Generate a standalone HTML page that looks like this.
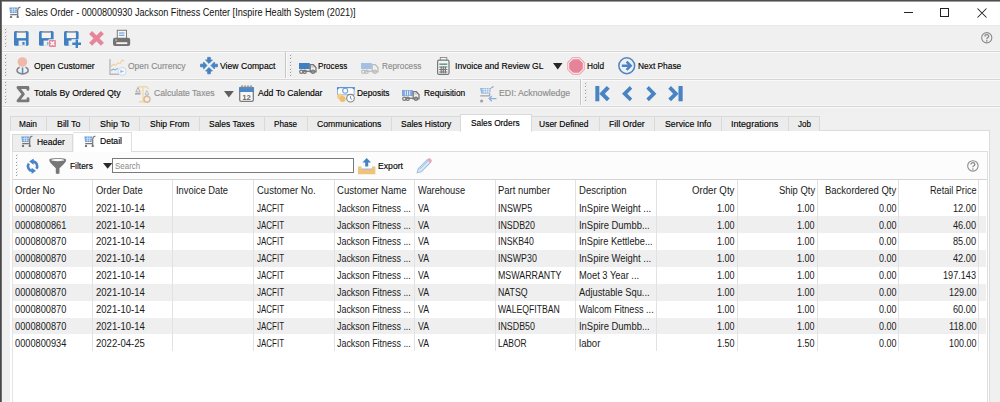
<!DOCTYPE html>
<html><head><meta charset="utf-8"><style>*{box-sizing:border-box;margin:0;padding:0}
html,body{width:1000px;height:402px;overflow:hidden;background:#f0f0f0}
body{font-family:"Liberation Sans",sans-serif;position:relative}
.t{position:absolute;white-space:nowrap;line-height:10px;transform-origin:0 0}
.r{position:absolute}
.i{position:absolute;overflow:visible}
</style></head><body>
<div class="r" style="left:0px;top:0px;width:1000px;height:402px;background:#f0f0f0"></div>
<div class="r" style="left:2px;top:1px;width:998px;height:24px;background:#ffffff"></div>
<div class="r" style="left:2px;top:25px;width:998px;height:1px;background:#e9e9e9"></div>
<div class="r" style="left:0px;top:0px;width:1000px;height:1px;background:#4e4e4e"></div>
<div class="r" style="left:0px;top:1px;width:1000px;height:1px;background:#9a9a9a"></div>
<div class="r" style="left:0px;top:0px;width:1px;height:402px;background:#4a4a4a"></div>
<div class="r" style="left:1px;top:1px;width:1px;height:401px;background:#6e6e6e"></div>
<svg class="i" style="left:9.2px;top:7px" width="12" height="11.5" viewBox="0 0 12 11.5"><path d="M0.3 0.6 H8.4 L7.7 5.9 H1.1 Z" fill="#6d9fd6"/><path d="M1.4 2.4 H8 M1.6 4.2 H7.8 M3.4 0.8 V5.7 M5.6 0.8 V5.7" stroke="#dbe7f4" stroke-width="0.7"/><path d="M8.7 9 V3 L9.5 0.9 L11.4 0" fill="none" stroke="#767676" stroke-width="1.2"/><path d="M1.2 7.6 H8.7" stroke="#767676" stroke-width="1.3"/><circle cx="2" cy="9.9" r="1.2" fill="#767676"/><circle cx="8.7" cy="9.9" r="1.2" fill="#767676"/></svg>
<div class="t" style="left:25.00px;top:8.20px;font-size:10px;color:#111;transform:scaleX(0.9110);-webkit-text-stroke:0px #111">Sales Order - 0000800930 Jackson Fitness Center [Inspire Health System (2021)]</div>
<div class="r" style="left:904px;top:12px;width:9px;height:1px;background:#222"></div>
<div class="r" style="left:940px;top:8px;width:9px;height:9px;border:1px solid #222"></div>
<svg class="i" style="left:977px;top:8px" width="10" height="10" viewBox="0 0 10 10"><path d="M0.5 0.5 L9.5 9.5 M9.5 0.5 L0.5 9.5" stroke="#222" stroke-width="1.05"/></svg>
<div class="r" style="left:5px;top:29.0px;width:1px;height:1px;background:#9a9a9a"></div>
<div class="r" style="left:6px;top:28.0px;width:1px;height:1px;background:#dadada"></div>
<div class="r" style="left:5px;top:32.4px;width:1px;height:1px;background:#9a9a9a"></div>
<div class="r" style="left:6px;top:31.4px;width:1px;height:1px;background:#dadada"></div>
<div class="r" style="left:5px;top:35.8px;width:1px;height:1px;background:#9a9a9a"></div>
<div class="r" style="left:6px;top:34.8px;width:1px;height:1px;background:#dadada"></div>
<div class="r" style="left:5px;top:39.2px;width:1px;height:1px;background:#9a9a9a"></div>
<div class="r" style="left:6px;top:38.2px;width:1px;height:1px;background:#dadada"></div>
<div class="r" style="left:5px;top:42.6px;width:1px;height:1px;background:#9a9a9a"></div>
<div class="r" style="left:6px;top:41.6px;width:1px;height:1px;background:#dadada"></div>
<div class="r" style="left:5px;top:46.0px;width:1px;height:1px;background:#9a9a9a"></div>
<div class="r" style="left:6px;top:45.0px;width:1px;height:1px;background:#dadada"></div>
<svg class="i" style="left:14.4px;top:31px" width="18" height="17" viewBox="0 0 18 17"><rect x="0" y="0" width="14.6" height="14.8" rx="1.6" fill="#4080c2"/><rect x="2.7" y="1.5" width="9.2" height="5.6" fill="#f4f4f4"/><rect x="3.3" y="0" width="8.2" height="1.5" fill="#9a9a9a"/><rect x="4.6" y="9.6" width="7.3" height="5.2" fill="#f0f0f0"/><rect x="8.4" y="11" width="2.2" height="2.8" fill="#4080c2"/></svg>
<svg class="i" style="left:39.2px;top:31px" width="18" height="17" viewBox="0 0 18 17"><rect x="0" y="0" width="14.6" height="14.8" rx="1.6" fill="#4080c2"/><rect x="2.7" y="1.5" width="9.2" height="5.6" fill="#f4f4f4"/><rect x="3.3" y="0" width="8.2" height="1.5" fill="#9a9a9a"/><rect x="4.6" y="9.6" width="7.3" height="5.2" fill="#f0f0f0"/><rect x="8.4" y="11" width="2.2" height="2.8" fill="#4080c2"/><rect x="9.3" y="8.3" width="8" height="8" rx="1" fill="#f0f0f0"/><rect x="10" y="9" width="6.9" height="7" rx="0.8" fill="#e7879b"/><path d="M11.6 10.6 L15.3 14.3 M15.3 10.6 L11.6 14.3" stroke="#fff" stroke-width="1.4"/></svg>
<svg class="i" style="left:64.1px;top:31px" width="18" height="17" viewBox="0 0 18 17"><rect x="0" y="0" width="14.6" height="14.8" rx="1.6" fill="#4080c2"/><rect x="2.7" y="1.5" width="9.2" height="5.6" fill="#f4f4f4"/><rect x="3.3" y="0" width="8.2" height="1.5" fill="#9a9a9a"/><rect x="4.6" y="9.6" width="7.3" height="5.2" fill="#f0f0f0"/><rect x="8.4" y="11" width="2.2" height="2.8" fill="#4080c2"/><rect x="7.5" y="8.2" width="10" height="9" fill="#f0f0f0"/><path d="M12.8 8.6 V17 M8.3 12.8 H17" stroke="#4080c2" stroke-width="2.4"/></svg>
<svg class="i" style="left:89.2px;top:31.2px" width="15" height="14.8" viewBox="0 0 15 14.8"><path d="M1.6 1.5 L13.4 13.3 M13.4 1.5 L1.6 13.3" stroke="#e6859a" stroke-width="4.2" stroke-linecap="butt"/></svg>
<svg class="i" style="left:113px;top:30px" width="17.2" height="16.2" viewBox="0 0 17.2 16.2"><rect x="4.3" y="0.3" width="9.2" height="8.5" fill="#f6f6f6" stroke="#7a7a7a" stroke-width="1"/><path d="M6 3 H11.5 M6 5.2 H11.5" stroke="#5a93d0" stroke-width="1.1"/><rect x="0" y="7.8" width="17.2" height="8.3" rx="2" fill="#727272"/><rect x="3.3" y="12.2" width="11" height="1.9" fill="#f2f2f2"/><rect x="2.2" y="9.6" width="1.8" height="0.9" fill="#ddd"/></svg>
<svg class="i" style="left:980.5px;top:32px" width="11.5" height="11.5" viewBox="0 0 11.5 11.5"><circle cx="5.75" cy="5.75" r="5.1" fill="none" stroke="#8a8a8a" stroke-width="1.1"/><path d="M3.9 4.4 Q3.9 2.6 5.8 2.6 Q7.7 2.6 7.7 4.3 Q7.7 5.3 6.4 5.9 Q5.8 6.2 5.8 7.2" fill="none" stroke="#8a8a8a" stroke-width="1.3"/><circle cx="5.8" cy="8.9" r="0.8" fill="#8a8a8a"/></svg>
<div class="r" style="left:2px;top:50px;width:998px;height:1px;background:#f7f7f7"></div>
<div class="r" style="left:2px;top:51px;width:998px;height:1px;background:#d6d6d6"></div>
<div class="r" style="left:2px;top:52px;width:998px;height:1px;background:#fafafa"></div>
<div class="r" style="left:5px;top:55.0px;width:1px;height:1px;background:#9a9a9a"></div>
<div class="r" style="left:6px;top:54.0px;width:1px;height:1px;background:#dadada"></div>
<div class="r" style="left:5px;top:58.4px;width:1px;height:1px;background:#9a9a9a"></div>
<div class="r" style="left:6px;top:57.4px;width:1px;height:1px;background:#dadada"></div>
<div class="r" style="left:5px;top:61.8px;width:1px;height:1px;background:#9a9a9a"></div>
<div class="r" style="left:6px;top:60.8px;width:1px;height:1px;background:#dadada"></div>
<div class="r" style="left:5px;top:65.2px;width:1px;height:1px;background:#9a9a9a"></div>
<div class="r" style="left:6px;top:64.2px;width:1px;height:1px;background:#dadada"></div>
<div class="r" style="left:5px;top:68.6px;width:1px;height:1px;background:#9a9a9a"></div>
<div class="r" style="left:6px;top:67.6px;width:1px;height:1px;background:#dadada"></div>
<div class="r" style="left:5px;top:72.0px;width:1px;height:1px;background:#9a9a9a"></div>
<div class="r" style="left:6px;top:71.0px;width:1px;height:1px;background:#dadada"></div>
<div class="r" style="left:5px;top:75.4px;width:1px;height:1px;background:#9a9a9a"></div>
<div class="r" style="left:6px;top:74.4px;width:1px;height:1px;background:#dadada"></div>
<svg class="i" style="left:16px;top:57px" width="13.5" height="18" viewBox="0 0 13.5 18"><circle cx="6.4" cy="5" r="4.8" fill="#efb9aa"/><path d="M3.7 10.3 A5.6 3.6 0 1 0 9.5 10.3" fill="none" stroke="#858585" stroke-width="1.6"/><rect x="5.8" y="10.5" width="1.5" height="6.6" fill="#4b8bcc"/></svg>
<div class="t" style="left:34.30px;top:61.30px;font-size:9.75px;color:#000;transform:scaleX(0.8818);-webkit-text-stroke:0.15px #000">Open Customer</div>
<svg class="i" style="left:108.5px;top:59px" width="18" height="16" viewBox="0 0 18 16"><path d="M1 0 V15.2 H10" fill="none" stroke="#b9b9b9" stroke-width="1.4"/><path d="M2 7.5 L4.5 5.2 L6.5 6.3 L9 3.8 L11 4.6 L13.3 1 L15 2.3" fill="none" stroke="#f1d197" stroke-width="1.1"/><path d="M2 11.5 L4.3 10.2 L6.3 11 L8.8 9.3" fill="none" stroke="#86b0de" stroke-width="1.1"/><circle cx="13.2" cy="12.4" r="4" fill="#f4f8fc" stroke="#c3d6ec" stroke-width="0.9"/><path d="M12 10.8 V14 M11.4 12.4 H14.6" stroke="#8fb3da" stroke-width="0.9"/></svg>
<div class="t" style="left:128.40px;top:61.30px;font-size:9.75px;color:#8c8c8c;transform:scaleX(0.8713);-webkit-text-stroke:0.15px #8c8c8c">Open Currency</div>
<svg class="i" style="left:199.5px;top:57.3px" width="18" height="17.5" viewBox="0 0 18 17.5"><g fill="#4582c4" stroke="#4582c4" stroke-width="0.9" stroke-linejoin="round"><path d="M9 6.4 L5.6 3 L7.7 3 L7.7 0.4 L10.3 0.4 L10.3 3 L12.4 3 Z"/><path d="M9 10.6 L5.6 14 L7.7 14 L7.7 16.8 L10.3 16.8 L10.3 14 L12.4 14 Z"/><path d="M7 8.5 L3.6 5.1 L3.6 7.2 L0.6 7.2 L0.6 9.8 L3.6 9.8 L3.6 11.9 Z"/><path d="M11 8.5 L14.4 5.1 L14.4 7.2 L17.4 7.2 L17.4 9.8 L14.4 9.8 L14.4 11.9 Z"/></g></svg>
<div class="t" style="left:220.00px;top:61.30px;font-size:9.75px;color:#000;transform:scaleX(0.8837);-webkit-text-stroke:0.15px #000">View Compact</div>
<div class="r" style="left:285px;top:52px;width:1px;height:27px;background:#c6c6c6"></div>
<div class="r" style="left:286px;top:52px;width:1px;height:27px;background:#fbfbfb"></div>
<div class="r" style="left:289.5px;top:55.0px;width:1px;height:1px;background:#9a9a9a"></div>
<div class="r" style="left:290.5px;top:54.0px;width:1px;height:1px;background:#dadada"></div>
<div class="r" style="left:289.5px;top:58.4px;width:1px;height:1px;background:#9a9a9a"></div>
<div class="r" style="left:290.5px;top:57.4px;width:1px;height:1px;background:#dadada"></div>
<div class="r" style="left:289.5px;top:61.8px;width:1px;height:1px;background:#9a9a9a"></div>
<div class="r" style="left:290.5px;top:60.8px;width:1px;height:1px;background:#dadada"></div>
<div class="r" style="left:289.5px;top:65.2px;width:1px;height:1px;background:#9a9a9a"></div>
<div class="r" style="left:290.5px;top:64.2px;width:1px;height:1px;background:#dadada"></div>
<div class="r" style="left:289.5px;top:68.6px;width:1px;height:1px;background:#9a9a9a"></div>
<div class="r" style="left:290.5px;top:67.6px;width:1px;height:1px;background:#dadada"></div>
<div class="r" style="left:289.5px;top:72.0px;width:1px;height:1px;background:#9a9a9a"></div>
<div class="r" style="left:290.5px;top:71.0px;width:1px;height:1px;background:#dadada"></div>
<div class="r" style="left:289.5px;top:75.4px;width:1px;height:1px;background:#9a9a9a"></div>
<div class="r" style="left:290.5px;top:74.4px;width:1px;height:1px;background:#dadada"></div>
<svg class="i" style="left:298.6px;top:62.6px" width="17.5" height="10.8" viewBox="0 0 17.5 10.8"><rect x="0" y="0" width="10.8" height="6" fill="#4080c2"/><path d="M11.2 1.7 H14.3 L17 4.6 V8.8 H11.2 Z" fill="none" stroke="#747474" stroke-width="1.3"/><path d="M12.3 2.9 H14 L15.6 4.6 H12.3 Z" fill="#747474" opacity="0.35"/><rect x="5" y="7.6" width="6.5" height="1.3" fill="#747474"/><circle cx="2.3" cy="8.8" r="1.6" fill="none" stroke="#747474" stroke-width="1.2"/><circle cx="5.7" cy="8.8" r="1.6" fill="none" stroke="#747474" stroke-width="1.2"/><circle cx="14" cy="8.8" r="1.6" fill="none" stroke="#747474" stroke-width="1.2"/></svg>
<div class="t" style="left:318.40px;top:61.30px;font-size:9.75px;color:#000;transform:scaleX(0.8296);-webkit-text-stroke:0.15px #000">Process</div>
<svg class="i" style="left:361px;top:62.6px" width="17.5" height="10.8" viewBox="0 0 17.5 10.8"><g opacity="1"><rect x="0" y="0" width="10.8" height="6" fill="#a4c0e2"/><path d="M11.2 1.7 H14.3 L17 4.6 V8.8 H11.2 Z" fill="none" stroke="#bdbdbd" stroke-width="1.3"/><rect x="5" y="7.6" width="6.5" height="1.3" fill="#bdbdbd"/><circle cx="2.3" cy="8.8" r="1.6" fill="none" stroke="#bdbdbd" stroke-width="1.2"/><circle cx="5.7" cy="8.8" r="1.6" fill="none" stroke="#bdbdbd" stroke-width="1.2"/><circle cx="14" cy="8.8" r="1.6" fill="none" stroke="#bdbdbd" stroke-width="1.2"/></g></svg>
<div class="t" style="left:381.60px;top:61.30px;font-size:9.75px;color:#8c8c8c;transform:scaleX(0.8454);-webkit-text-stroke:0.15px #8c8c8c">Reprocess</div>
<svg class="i" style="left:437px;top:57px" width="12.5" height="18" viewBox="0 0 12.5 18"><rect x="3.3" y="0.5" width="6.5" height="4" fill="#f7f7f7" stroke="#8a8a8a" stroke-width="0.9"/><rect x="0.6" y="3.2" width="11.4" height="14.2" rx="1.5" fill="#f4f4f4" stroke="#767676" stroke-width="1.2"/><rect x="2.3" y="6.4" width="8" height="1.6" fill="#5fa386"/><path d="M2.2 10 H10.4 M2.2 12.5 H10.4 M2.2 15 H10.4 M4.2 9.2 V16.2 M6.3 9.2 V16.2 M8.4 9.2 V16.2" stroke="#777" stroke-width="1.2"/></svg>
<div class="t" style="left:454.50px;top:61.30px;font-size:9.75px;color:#000;transform:scaleX(0.8830);-webkit-text-stroke:0.15px #000">Invoice and Review GL</div>
<svg class="i" style="left:553.2px;top:62.6px" width="9.5" height="6.5" viewBox="0 0 9.5 6.5"><path d="M0 0 H9.5 L4.75 6.5 Z" fill="#262626"/></svg>
<svg class="i" style="left:566.5px;top:57px" width="18" height="18" viewBox="0 0 18 18"><path d="M5.3 0.3 H12.7 L17.7 5.3 V12.7 L12.7 17.7 H5.3 L0.3 12.7 V5.3 Z" fill="#eb9dac"/><path d="M5.7 1.3 H12.3 L16.7 5.7 V12.3 L12.3 16.7 H5.7 L1.3 12.3 V5.7 Z" fill="#fdf3f5"/><path d="M6.1 2.2 H11.9 L15.8 6.1 V11.9 L11.9 15.8 H6.1 L2.2 11.9 V6.1 Z" fill="#e58397"/></svg>
<div class="t" style="left:586.75px;top:61.30px;font-size:9.75px;color:#000;transform:scaleX(0.8464);-webkit-text-stroke:0.15px #000">Hold</div>
<svg class="i" style="left:617.5px;top:57.4px" width="17.5" height="17.5" viewBox="0 0 17.5 17.5"><circle cx="8.75" cy="8.75" r="7.9" fill="none" stroke="#4a84c4" stroke-width="1.5"/><path d="M3.8 8.75 H11.8" stroke="#4a84c4" stroke-width="2.5"/><path d="M8.6 4.6 L12.7 8.75 L8.6 12.9" fill="none" stroke="#4a84c4" stroke-width="2.5"/></svg>
<div class="t" style="left:637.50px;top:61.30px;font-size:9.75px;color:#000;transform:scaleX(0.8580);-webkit-text-stroke:0.15px #000">Next Phase</div>
<div class="r" style="left:2px;top:78px;width:998px;height:1px;background:#f7f7f7"></div>
<div class="r" style="left:2px;top:79px;width:998px;height:1px;background:#d6d6d6"></div>
<div class="r" style="left:2px;top:80px;width:998px;height:1px;background:#fafafa"></div>
<div class="r" style="left:5px;top:82.0px;width:1px;height:1px;background:#9a9a9a"></div>
<div class="r" style="left:6px;top:81.0px;width:1px;height:1px;background:#dadada"></div>
<div class="r" style="left:5px;top:85.4px;width:1px;height:1px;background:#9a9a9a"></div>
<div class="r" style="left:6px;top:84.4px;width:1px;height:1px;background:#dadada"></div>
<div class="r" style="left:5px;top:88.8px;width:1px;height:1px;background:#9a9a9a"></div>
<div class="r" style="left:6px;top:87.8px;width:1px;height:1px;background:#dadada"></div>
<div class="r" style="left:5px;top:92.2px;width:1px;height:1px;background:#9a9a9a"></div>
<div class="r" style="left:6px;top:91.2px;width:1px;height:1px;background:#dadada"></div>
<div class="r" style="left:5px;top:95.6px;width:1px;height:1px;background:#9a9a9a"></div>
<div class="r" style="left:6px;top:94.6px;width:1px;height:1px;background:#dadada"></div>
<div class="r" style="left:5px;top:99.0px;width:1px;height:1px;background:#9a9a9a"></div>
<div class="r" style="left:6px;top:98.0px;width:1px;height:1px;background:#dadada"></div>
<div class="r" style="left:5px;top:102.4px;width:1px;height:1px;background:#9a9a9a"></div>
<div class="r" style="left:6px;top:101.4px;width:1px;height:1px;background:#dadada"></div>
<svg class="i" style="left:15.5px;top:85.6px" width="13.5" height="16.4" viewBox="0 0 13.5 16.4"><path d="M11.9 3.4 V1.5 H2 L7.3 8.2 L2 14.9 H12 V12.8" fill="none" stroke="#787878" stroke-width="2.9" stroke-linejoin="round" stroke-linecap="round"/></svg>
<div class="t" style="left:34.00px;top:88.30px;font-size:9.75px;color:#000;transform:scaleX(0.9042);-webkit-text-stroke:0.15px #000">Totals By Ordered Qty</div>
<svg class="i" style="left:134.5px;top:85.6px" width="15.5" height="17.2" viewBox="0 0 15.5 17.2"><path d="M2.5 0.8 H11.5 L14 3 M8 0.8 V15.5 M4 15.8 H11" fill="none" stroke="#f0d9a6" stroke-width="1.4"/><path d="M3 1.5 L0.8 6 H5.2 Z" fill="none" stroke="#a0a0a0" stroke-width="0.8"/><rect x="0" y="7" width="5.6" height="1.6" fill="#a8a8a8"/><path d="M11.8 4.5 L10 8.3 H13.8 Z" fill="none" stroke="#b0b0b0" stroke-width="0.8"/><circle cx="12" cy="13.2" r="3" fill="#f6ede4" stroke="#d8b99a" stroke-width="1.4"/><rect x="10.8" y="9.2" width="2.4" height="1.6" fill="#d8b99a"/></svg>
<div class="t" style="left:154.00px;top:88.30px;font-size:9.75px;color:#8c8c8c;transform:scaleX(0.8814);-webkit-text-stroke:0.15px #8c8c8c">Calculate Taxes</div>
<svg class="i" style="left:224px;top:90.5px" width="9.8" height="6.4" viewBox="0 0 9.8 6.4"><path d="M0 0 H9.8 L4.9 6.4 Z" fill="#5e5e5e"/></svg>
<svg class="i" style="left:238.8px;top:84.8px" width="15" height="17" viewBox="0 0 15 17"><rect x="0.7" y="2.5" width="13.6" height="13.8" rx="1.4" fill="#f8f8f8" stroke="#7c7c7c" stroke-width="1.3"/><rect x="0" y="2.2" width="15" height="4.8" fill="#4a88c8"/><path d="M0 7 L2 6 L3.7 7 L5.5 6 L7.5 7 L9.5 6 L11.3 7 L13 6 L15 7" fill="#4a88c8"/><path d="M3 0.3 V3.5 M6 0.3 V3.5 M9 0.3 V3.5 M12 0.3 V3.5" stroke="#8a8a8a" stroke-width="1.3"/><text x="7.5" y="14.6" font-family="Liberation Sans" font-size="7.8" text-anchor="middle" fill="#6a6a6a" font-weight="bold">12</text></svg>
<div class="t" style="left:258.00px;top:88.30px;font-size:9.75px;color:#000;transform:scaleX(0.8904);-webkit-text-stroke:0.15px #000">Add To Calendar</div>
<svg class="i" style="left:336.5px;top:87.4px" width="17.5" height="15.4" viewBox="0 0 17.5 15.4"><rect x="0.4" y="0.4" width="16.7" height="7.4" fill="#fbfcfe" stroke="#7aa3d4" stroke-width="0.8"/><path d="M0 0 H3.5 L0 3 Z M17.5 0 H14 L17.5 3 Z" fill="#3f7ec2"/><rect x="0" y="0" width="17.5" height="1.2" fill="#5f97d0"/><circle cx="8.2" cy="3.8" r="2.5" fill="none" stroke="#6e9fd6" stroke-width="1.1"/><circle cx="3" cy="9.5" r="3" fill="#f2cf8b"/><circle cx="5.6" cy="12" r="3" fill="#ecc071"/><circle cx="13.5" cy="11.2" r="3.8" fill="#fbfbfb" stroke="#858585" stroke-width="1.1"/><path d="M13.5 9 V11.4 L15.2 12.6" fill="none" stroke="#5f8ec8" stroke-width="0.9"/></svg>
<div class="t" style="left:356.75px;top:88.30px;font-size:9.75px;color:#000;transform:scaleX(0.8569);-webkit-text-stroke:0.15px #000">Deposits</div>
<svg class="i" style="left:402.3px;top:89.8px" width="17.5" height="10.8" viewBox="0 0 17.5 10.8"><rect x="0" y="0" width="10.8" height="6" fill="#7ea6da"/><path d="M3.3 0.6 V5.4 M5.5 0.6 V5.4 M7.7 0.6 V5.4" stroke="#eef3fa" stroke-width="0.9"/><path d="M11.2 1.7 H14.3 L17 4.6 V8.8 H11.2 Z" fill="none" stroke="#777" stroke-width="1.3"/><path d="M12.3 2.9 H14 L15.6 4.6 H12.3 Z" fill="#777" opacity="0.35"/><rect x="5" y="7.6" width="6.5" height="1.3" fill="#777"/><circle cx="2.3" cy="8.8" r="1.6" fill="none" stroke="#777" stroke-width="1.2"/><circle cx="5.7" cy="8.8" r="1.6" fill="none" stroke="#777" stroke-width="1.2"/><circle cx="14" cy="8.8" r="1.6" fill="none" stroke="#777" stroke-width="1.2"/></svg>
<div class="t" style="left:423.75px;top:88.30px;font-size:9.75px;color:#000;transform:scaleX(0.8547);-webkit-text-stroke:0.15px #000">Requisition</div>
<svg class="i" style="left:479.3px;top:85.6px" width="18" height="17.2" viewBox="0 0 18 17.2"><path d="M1 2 H12.2 L11 7.7 H2.3 Z" fill="#8cb1de" opacity="0.9"/><path d="M3 3.6 H11.6 M3.6 5.8 H11 M5.2 2.2 V7.5 M7.5 2.2 V7.5 M9.7 2.2 V7.5" stroke="#e8f0fa" stroke-width="0.7"/><path d="M12.2 2 L14.5 0.6 M11 7.7 L10.3 9.8 H1.2" fill="none" stroke="#a3a3a3" stroke-width="1.2"/><circle cx="2.6" cy="15" r="1.6" fill="#a3a3a3"/><path d="M17.5 12.6 H10.2 M12.8 10 L10.2 12.6 L12.8 15.2" fill="none" stroke="#87aedc" stroke-width="1.3"/></svg>
<div class="t" style="left:498.75px;top:88.30px;font-size:9.75px;color:#8c8c8c;transform:scaleX(0.9000);-webkit-text-stroke:0.15px #8c8c8c">EDI: Acknowledge</div>
<div class="r" style="left:580.3px;top:79px;width:1px;height:27px;background:#c6c6c6"></div>
<div class="r" style="left:581.3px;top:79px;width:1px;height:27px;background:#fbfbfb"></div>
<div class="r" style="left:584.5px;top:83.0px;width:1px;height:1px;background:#9a9a9a"></div>
<div class="r" style="left:585.5px;top:82.0px;width:1px;height:1px;background:#dadada"></div>
<div class="r" style="left:584.5px;top:86.4px;width:1px;height:1px;background:#9a9a9a"></div>
<div class="r" style="left:585.5px;top:85.4px;width:1px;height:1px;background:#dadada"></div>
<div class="r" style="left:584.5px;top:89.8px;width:1px;height:1px;background:#9a9a9a"></div>
<div class="r" style="left:585.5px;top:88.8px;width:1px;height:1px;background:#dadada"></div>
<div class="r" style="left:584.5px;top:93.2px;width:1px;height:1px;background:#9a9a9a"></div>
<div class="r" style="left:585.5px;top:92.2px;width:1px;height:1px;background:#dadada"></div>
<div class="r" style="left:584.5px;top:96.6px;width:1px;height:1px;background:#9a9a9a"></div>
<div class="r" style="left:585.5px;top:95.6px;width:1px;height:1px;background:#dadada"></div>
<div class="r" style="left:584.5px;top:100.0px;width:1px;height:1px;background:#9a9a9a"></div>
<div class="r" style="left:585.5px;top:99.0px;width:1px;height:1px;background:#dadada"></div>
<svg class="i" style="left:594.5px;top:86px" width="88" height="15.4" viewBox="0 0 88 15.4"><g fill="#4884c4"><rect x="0.3" y="0" width="4" height="15.3"/><path d="M11.8 0 L14.7 2.8 L9.8 7.65 L14.7 12.5 L11.8 15.3 L4.2 7.65 Z"/><path d="M34.8 0 L37.2 2.8 L32.3 7.65 L37.2 12.5 L34.8 15.3 L27 7.65 Z"/><path d="M53.8 0 L51.4 2.8 L56.3 7.65 L51.4 12.5 L53.8 15.3 L61.4 7.65 Z"/><path d="M76 0 L73.3 2.8 L78.2 7.65 L73.3 12.5 L76 15.3 L83.6 7.65 Z"/><rect x="83.5" y="0" width="4.2" height="15.3"/></g></svg>
<div class="r" style="left:2px;top:105px;width:998px;height:1px;background:#f7f7f7"></div>
<div class="r" style="left:2px;top:106px;width:998px;height:1px;background:#d6d6d6"></div>
<div class="r" style="left:2px;top:107px;width:998px;height:1px;background:#fafafa"></div>
<div class="r" style="left:10px;top:130.5px;width:980px;height:272px;background:#ffffff"></div>
<div class="r" style="left:10px;top:130px;width:980px;height:1px;background:#dcdcdc"></div>
<div class="r" style="left:989px;top:130px;width:1px;height:272px;background:#dcdcdc"></div>
<div class="r" style="left:10.3px;top:116px;width:36.8px;height:15px;background:#ececec;border:1px solid #d9d9d9;border-bottom:none"></div>
<div class="t" style="left:18.60px;top:119.20px;font-size:9.75px;color:#000;transform:scaleX(0.8508);-webkit-text-stroke:0.15px #000">Main</div>
<div class="r" style="left:46.1px;top:116px;width:44.3px;height:15px;background:#ececec;border:1px solid #d9d9d9;border-bottom:none"></div>
<div class="t" style="left:56.60px;top:119.20px;font-size:9.75px;color:#000;transform:scaleX(0.9057);-webkit-text-stroke:0.15px #000">Bill To</div>
<div class="r" style="left:89.4px;top:116px;width:50.6px;height:15px;background:#ececec;border:1px solid #d9d9d9;border-bottom:none"></div>
<div class="t" style="left:100.00px;top:119.20px;font-size:9.75px;color:#000;transform:scaleX(0.9144);-webkit-text-stroke:0.15px #000">Ship To</div>
<div class="r" style="left:139.0px;top:116px;width:60.6px;height:15px;background:#ececec;border:1px solid #d9d9d9;border-bottom:none"></div>
<div class="t" style="left:149.60px;top:119.20px;font-size:9.75px;color:#000;transform:scaleX(0.8766);-webkit-text-stroke:0.15px #000">Ship From</div>
<div class="r" style="left:198.6px;top:116px;width:66.4px;height:15px;background:#ececec;border:1px solid #d9d9d9;border-bottom:none"></div>
<div class="t" style="left:209.00px;top:119.20px;font-size:9.75px;color:#000;transform:scaleX(0.8690);-webkit-text-stroke:0.15px #000">Sales Taxes</div>
<div class="r" style="left:264.0px;top:116px;width:43.7px;height:15px;background:#ececec;border:1px solid #d9d9d9;border-bottom:none"></div>
<div class="t" style="left:274.00px;top:119.20px;font-size:9.75px;color:#000;transform:scaleX(0.8306);-webkit-text-stroke:0.15px #000">Phase</div>
<div class="r" style="left:306.7px;top:116px;width:85.3px;height:15px;background:#ececec;border:1px solid #d9d9d9;border-bottom:none"></div>
<div class="t" style="left:316.60px;top:119.20px;font-size:9.75px;color:#000;transform:scaleX(0.8866);-webkit-text-stroke:0.15px #000">Communications</div>
<div class="r" style="left:391.0px;top:116px;width:69.6px;height:15px;background:#ececec;border:1px solid #d9d9d9;border-bottom:none"></div>
<div class="t" style="left:400.70px;top:119.20px;font-size:9.75px;color:#000;transform:scaleX(0.8759);-webkit-text-stroke:0.15px #000">Sales History</div>
<div class="r" style="left:459.6px;top:114px;width:72.0px;height:18px;background:#fff;border:1px solid #d9d9d9;border-bottom:none"></div>
<div class="t" style="left:471.00px;top:118.20px;font-size:9.75px;color:#000;transform:scaleX(0.8535);-webkit-text-stroke:0.15px #000">Sales Orders</div>
<div class="r" style="left:530.6px;top:116px;width:69.4px;height:15px;background:#ececec;border:1px solid #d9d9d9;border-bottom:none"></div>
<div class="t" style="left:539.40px;top:119.20px;font-size:9.75px;color:#000;transform:scaleX(0.8711);-webkit-text-stroke:0.15px #000">User Defined</div>
<div class="r" style="left:599.0px;top:116px;width:56.4px;height:15px;background:#ececec;border:1px solid #d9d9d9;border-bottom:none"></div>
<div class="t" style="left:609.40px;top:119.20px;font-size:9.75px;color:#000;transform:scaleX(0.8884);-webkit-text-stroke:0.15px #000">Fill Order</div>
<div class="r" style="left:654.4px;top:116px;width:67.2px;height:15px;background:#ececec;border:1px solid #d9d9d9;border-bottom:none"></div>
<div class="t" style="left:665.00px;top:119.20px;font-size:9.75px;color:#000;transform:scaleX(0.9013);-webkit-text-stroke:0.15px #000">Service Info</div>
<div class="r" style="left:720.6px;top:116px;width:68.0px;height:15px;background:#ececec;border:1px solid #d9d9d9;border-bottom:none"></div>
<div class="t" style="left:731.00px;top:119.20px;font-size:9.75px;color:#000;transform:scaleX(0.9295);-webkit-text-stroke:0.15px #000">Integrations</div>
<div class="r" style="left:787.6px;top:116px;width:32.4px;height:15px;background:#ececec;border:1px solid #d9d9d9;border-bottom:none"></div>
<div class="t" style="left:798.00px;top:119.20px;font-size:9.75px;color:#000;transform:scaleX(0.8282);-webkit-text-stroke:0.15px #000">Job</div>
<div class="r" style="left:12.3px;top:134px;width:61px;height:17px;background:#eeeeee;border:1px solid #d9d9d9;border-bottom:none"></div>
<div class="r" style="left:73px;top:132px;width:59px;height:19.5px;background:#ffffff;border:1px solid #dedede;border-left-color:#f4f4f4;border-bottom:none"></div>
<svg class="i" style="left:20.8px;top:136.2px" width="12" height="11.5" viewBox="0 0 12 11.5"><path d="M0.3 0.6 H8.4 L7.7 5.9 H1.1 Z" fill="#6d9fd6"/><path d="M1.4 2.4 H8 M1.6 4.2 H7.8 M3.4 0.8 V5.7 M5.6 0.8 V5.7" stroke="#dbe7f4" stroke-width="0.7"/><path d="M8.7 9 V3 L9.5 0.9 L11.4 0" fill="none" stroke="#767676" stroke-width="1.2"/><path d="M1.2 7.6 H8.7" stroke="#767676" stroke-width="1.3"/><circle cx="2" cy="9.9" r="1.2" fill="#767676"/><circle cx="8.7" cy="9.9" r="1.2" fill="#767676"/></svg>
<div class="t" style="left:36.60px;top:137.30px;font-size:9.75px;color:#000;transform:scaleX(0.8693);-webkit-text-stroke:0.15px #000">Header</div>
<svg class="i" style="left:84.4px;top:136px" width="12" height="11.5" viewBox="0 0 12 11.5"><path d="M0.3 0.6 H8.4 L7.7 5.9 H1.1 Z" fill="#6d9fd6"/><path d="M1.4 2.4 H8 M1.6 4.2 H7.8 M3.4 0.8 V5.7 M5.6 0.8 V5.7" stroke="#dbe7f4" stroke-width="0.7"/><path d="M8.7 9 V3 L9.5 0.9 L11.4 0" fill="none" stroke="#767676" stroke-width="1.2"/><path d="M1.2 7.6 H8.7" stroke="#767676" stroke-width="1.3"/><circle cx="2" cy="9.9" r="1.2" fill="#767676"/><circle cx="8.7" cy="9.9" r="1.2" fill="#767676"/></svg>
<div class="t" style="left:100.00px;top:136.30px;font-size:9.75px;color:#000;transform:scaleX(0.8814);-webkit-text-stroke:0.15px #000">Detail</div>
<div class="r" style="left:12px;top:151px;width:61px;height:1px;background:#dcdcdc"></div>
<div class="r" style="left:132px;top:151px;width:856px;height:1px;background:#dcdcdc"></div>
<div class="r" style="left:12px;top:152px;width:975px;height:27px;background:#fcfcfc"></div>
<div class="r" style="left:12px;top:178.6px;width:976px;height:1px;background:#d4d4d4"></div>
<div class="r" style="left:987px;top:151px;width:1px;height:251px;background:#dedede"></div>
<div class="r" style="left:12px;top:151px;width:1px;height:251px;background:#e4e4e4"></div>
<div class="r" style="left:15.5px;top:155.0px;width:1px;height:1px;background:#9a9a9a"></div>
<div class="r" style="left:16.5px;top:154.0px;width:1px;height:1px;background:#dadada"></div>
<div class="r" style="left:15.5px;top:158.4px;width:1px;height:1px;background:#9a9a9a"></div>
<div class="r" style="left:16.5px;top:157.4px;width:1px;height:1px;background:#dadada"></div>
<div class="r" style="left:15.5px;top:161.8px;width:1px;height:1px;background:#9a9a9a"></div>
<div class="r" style="left:16.5px;top:160.8px;width:1px;height:1px;background:#dadada"></div>
<div class="r" style="left:15.5px;top:165.2px;width:1px;height:1px;background:#9a9a9a"></div>
<div class="r" style="left:16.5px;top:164.2px;width:1px;height:1px;background:#dadada"></div>
<div class="r" style="left:15.5px;top:168.6px;width:1px;height:1px;background:#9a9a9a"></div>
<div class="r" style="left:16.5px;top:167.6px;width:1px;height:1px;background:#dadada"></div>
<div class="r" style="left:15.5px;top:172.0px;width:1px;height:1px;background:#9a9a9a"></div>
<div class="r" style="left:16.5px;top:171.0px;width:1px;height:1px;background:#dadada"></div>
<div class="r" style="left:15.5px;top:175.4px;width:1px;height:1px;background:#9a9a9a"></div>
<div class="r" style="left:16.5px;top:174.4px;width:1px;height:1px;background:#dadada"></div>
<svg class="i" style="left:25.8px;top:157.8px" width="13" height="16" viewBox="0 0 13 16"><path d="M7 3.6 A4.6 4.6 0 0 1 10.4 10.8" fill="none" stroke="#4a84c4" stroke-width="2.6"/><path d="M3.2 3.6 L7.6 0.5 L7.6 6.7 Z" fill="#4a84c4"/><path d="M6.2 12.8 A4.6 4.6 0 0 1 2.8 5.6" fill="none" stroke="#4a84c4" stroke-width="2.6"/><path d="M10 12.8 L5.6 9.7 L5.6 15.9 Z" fill="#4a84c4"/></svg>
<svg class="i" style="left:49.2px;top:158px" width="17.4" height="16.2" viewBox="0 0 17.4 16.2"><path d="M0.2 2 Q0.4 4.5 3 6.5 L6.8 10.3 L6.8 15.6 Q8.7 16.3 10.5 15.6 L10.5 10.3 L14.4 6.5 Q17 4.5 17.2 2 Q17 0 8.7 0 Q0.4 0 0.2 2 Z" fill="#777"/><ellipse cx="8.7" cy="2" rx="6.6" ry="1.2" fill="#fafafa"/></svg>
<div class="t" style="left:69.60px;top:160.90px;font-size:9.75px;color:#000;transform:scaleX(0.8597);-webkit-text-stroke:0.15px #000">Filters</div>
<svg class="i" style="left:102.8px;top:163.2px" width="9.3" height="5.8" viewBox="0 0 9.3 5.8"><path d="M0 0 H9.3 L4.65 5.8 Z" fill="#2a2a2a"/></svg>
<div class="r" style="left:112.2px;top:158.2px;width:241.6px;height:14.6px;background:#fff;border:1px solid #7a7a7a"></div>
<div class="t" style="left:114.80px;top:160.90px;font-size:9.75px;color:#8e8e8e;transform:scaleX(0.8153);-webkit-text-stroke:0.05px #8e8e8e">Search</div>
<svg class="i" style="left:357.8px;top:158.2px" width="17.4" height="16.2" viewBox="0 0 17.4 16.2"><path d="M0 8.6 H3.4 V11.6 H14 V8.6 H17.4 V16.2 H0 Z" fill="#eec47c"/><rect x="3.4" y="10.5" width="10.6" height="1.5" fill="#bdbdbd"/><path d="M8.7 0 L13 4.4 H10.2 V8.6 H7.2 V4.4 H4.4 Z" fill="#4583c4"/></svg>
<div class="t" style="left:378.00px;top:160.90px;font-size:9.75px;color:#000;transform:scaleX(0.8872);-webkit-text-stroke:0.15px #000">Export</div>
<svg class="i" style="left:416.3px;top:157.8px" width="16" height="16" viewBox="0 0 16 16"><path d="M1.2 14.8 L2.2 10.8 L11.5 1.5 L14.5 4.5 L5.2 13.8 Z" fill="#dce8f5" stroke="#a3c0e3" stroke-width="1.1"/><path d="M3.5 11.5 L12.3 2.8" stroke="#a3c0e3" stroke-width="0.9"/><path d="M11.3 1.7 L12.6 0.4 Q13.4 -0.2 14.2 0.4 L15.6 1.8 Q16.2 2.6 15.6 3.4 L14.3 4.7 Z" fill="#f0a6b4"/></svg>
<svg class="i" style="left:966.7px;top:159.8px" width="11.8" height="11.8" viewBox="0 0 11.8 11.8"><circle cx="5.9" cy="5.9" r="5.2" fill="none" stroke="#8a8a8a" stroke-width="1.1"/><path d="M4 4.5 Q4 2.7 5.9 2.7 Q7.8 2.7 7.8 4.4 Q7.8 5.4 6.5 6 Q5.9 6.3 5.9 7.3" fill="none" stroke="#8a8a8a" stroke-width="1.3"/><circle cx="5.9" cy="9" r="0.8" fill="#8a8a8a"/></svg>
<div class="r" style="left:13px;top:216.00px;width:973px;height:16.92px;background:#efefef"></div>
<div class="r" style="left:13px;top:249.84px;width:973px;height:16.92px;background:#efefef"></div>
<div class="r" style="left:13px;top:283.68px;width:973px;height:16.92px;background:#efefef"></div>
<div class="r" style="left:13px;top:317.52px;width:973px;height:16.92px;background:#efefef"></div>
<div class="r" style="left:92.0px;top:179.5px;width:1px;height:171.86px;background:#e2e2e2"></div>
<div class="r" style="left:172.3px;top:179.5px;width:1px;height:171.86px;background:#e2e2e2"></div>
<div class="r" style="left:253.0px;top:179.5px;width:1px;height:171.86px;background:#e2e2e2"></div>
<div class="r" style="left:333.6px;top:179.5px;width:1px;height:171.86px;background:#e2e2e2"></div>
<div class="r" style="left:413.9px;top:179.5px;width:1px;height:171.86px;background:#e2e2e2"></div>
<div class="r" style="left:494.5px;top:179.5px;width:1px;height:171.86px;background:#e2e2e2"></div>
<div class="r" style="left:575.3px;top:179.5px;width:1px;height:171.86px;background:#e2e2e2"></div>
<div class="r" style="left:655.9px;top:179.5px;width:1px;height:171.86px;background:#e2e2e2"></div>
<div class="r" style="left:736.5px;top:179.5px;width:1px;height:171.86px;background:#e2e2e2"></div>
<div class="r" style="left:817.0px;top:179.5px;width:1px;height:171.86px;background:#e2e2e2"></div>
<div class="r" style="left:898.1px;top:179.5px;width:1px;height:171.86px;background:#e2e2e2"></div>
<div class="r" style="left:978.2px;top:179.5px;width:1px;height:171.86px;background:#e2e2e2"></div>
<div class="t" style="left:15.20px;top:185.60px;font-size:10.0px;color:#1a1a1a;transform:scaleX(0.9732);-webkit-text-stroke:0px #1a1a1a">Order No</div>
<div class="t" style="left:95.70px;top:185.60px;font-size:10.0px;color:#1a1a1a;transform:scaleX(0.9444);-webkit-text-stroke:0px #1a1a1a">Order Date</div>
<div class="t" style="left:176.00px;top:185.60px;font-size:10.0px;color:#1a1a1a;transform:scaleX(0.9353);-webkit-text-stroke:0px #1a1a1a">Invoice Date</div>
<div class="t" style="left:256.70px;top:185.60px;font-size:10.0px;color:#1a1a1a;transform:scaleX(0.9498);-webkit-text-stroke:0px #1a1a1a">Customer No.</div>
<div class="t" style="left:337.30px;top:185.60px;font-size:10.0px;color:#1a1a1a;transform:scaleX(0.9547);-webkit-text-stroke:0px #1a1a1a">Customer Name</div>
<div class="t" style="left:417.60px;top:185.60px;font-size:10.0px;color:#1a1a1a;transform:scaleX(0.9272);-webkit-text-stroke:0px #1a1a1a">Warehouse</div>
<div class="t" style="left:498.20px;top:185.60px;font-size:10.0px;color:#1a1a1a;transform:scaleX(0.9455);-webkit-text-stroke:0px #1a1a1a">Part number</div>
<div class="t" style="left:579.00px;top:185.60px;font-size:10.0px;color:#1a1a1a;transform:scaleX(0.9520);-webkit-text-stroke:0px #1a1a1a">Description</div>
<div class="t" style="left:692.00px;top:185.60px;font-size:10.0px;color:#1a1a1a;transform:scaleX(0.9658);-webkit-text-stroke:0px #1a1a1a">Order Qty</div>
<div class="t" style="left:778.80px;top:185.60px;font-size:10.0px;color:#1a1a1a;transform:scaleX(0.9426);-webkit-text-stroke:0px #1a1a1a">Ship Qty</div>
<div class="t" style="left:824.80px;top:185.60px;font-size:10.0px;color:#1a1a1a;transform:scaleX(0.9493);-webkit-text-stroke:0px #1a1a1a">Backordered Qty</div>
<div class="t" style="left:929.60px;top:185.60px;font-size:10.0px;color:#1a1a1a;transform:scaleX(0.9100);-webkit-text-stroke:0px #1a1a1a">Retail Price</div>
<div class="t" style="left:15.20px;top:203.60px;font-size:10.0px;color:#1a1a1a;transform:scaleX(0.9218);-webkit-text-stroke:0px #1a1a1a">0000800870</div>
<div class="t" style="left:95.70px;top:203.60px;font-size:10.0px;color:#1a1a1a;transform:scaleX(0.9540);-webkit-text-stroke:0px #1a1a1a">2021-10-14</div>
<div class="t" style="left:256.70px;top:203.60px;font-size:10.0px;color:#1a1a1a;transform:scaleX(0.7965);-webkit-text-stroke:0px #1a1a1a">JACFIT</div>
<div class="t" style="left:337.30px;top:203.60px;font-size:10.0px;color:#1a1a1a;transform:scaleX(0.8913);-webkit-text-stroke:0px #1a1a1a">Jackson Fitness ...</div>
<div class="t" style="left:417.60px;top:203.60px;font-size:10.0px;color:#1a1a1a;transform:scaleX(0.8730);-webkit-text-stroke:0px #1a1a1a">VA</div>
<div class="t" style="left:498.20px;top:203.60px;font-size:10.0px;color:#1a1a1a;transform:scaleX(0.8903);-webkit-text-stroke:0px #1a1a1a">INSWP5</div>
<div class="t" style="left:579.00px;top:203.60px;font-size:10.0px;color:#1a1a1a;transform:scaleX(0.9438);-webkit-text-stroke:0px #1a1a1a">InSpire Weight ...</div>
<div class="t" style="left:716.90px;top:203.60px;font-size:10.0px;color:#1a1a1a;transform:scaleX(0.8974);-webkit-text-stroke:0px #1a1a1a">1.00</div>
<div class="t" style="left:797.40px;top:203.60px;font-size:10.0px;color:#1a1a1a;transform:scaleX(0.8974);-webkit-text-stroke:0px #1a1a1a">1.00</div>
<div class="t" style="left:878.50px;top:203.60px;font-size:10.0px;color:#1a1a1a;transform:scaleX(0.8974);-webkit-text-stroke:0px #1a1a1a">0.00</div>
<div class="t" style="left:953.10px;top:203.60px;font-size:10.0px;color:#1a1a1a;transform:scaleX(0.9200);-webkit-text-stroke:0px #1a1a1a">12.00</div>
<div class="t" style="left:15.20px;top:220.52px;font-size:10.0px;color:#1a1a1a;transform:scaleX(0.9218);-webkit-text-stroke:0px #1a1a1a">0000800861</div>
<div class="t" style="left:95.70px;top:220.52px;font-size:10.0px;color:#1a1a1a;transform:scaleX(0.9540);-webkit-text-stroke:0px #1a1a1a">2021-10-14</div>
<div class="t" style="left:256.70px;top:220.52px;font-size:10.0px;color:#1a1a1a;transform:scaleX(0.7965);-webkit-text-stroke:0px #1a1a1a">JACFIT</div>
<div class="t" style="left:337.30px;top:220.52px;font-size:10.0px;color:#1a1a1a;transform:scaleX(0.8913);-webkit-text-stroke:0px #1a1a1a">Jackson Fitness ...</div>
<div class="t" style="left:417.60px;top:220.52px;font-size:10.0px;color:#1a1a1a;transform:scaleX(0.8730);-webkit-text-stroke:0px #1a1a1a">VA</div>
<div class="t" style="left:498.20px;top:220.52px;font-size:10.0px;color:#1a1a1a;transform:scaleX(0.8849);-webkit-text-stroke:0px #1a1a1a">INSDB20</div>
<div class="t" style="left:579.00px;top:220.52px;font-size:10.0px;color:#1a1a1a;transform:scaleX(0.9427);-webkit-text-stroke:0px #1a1a1a">InSpire Dumbb...</div>
<div class="t" style="left:716.90px;top:220.52px;font-size:10.0px;color:#1a1a1a;transform:scaleX(0.8974);-webkit-text-stroke:0px #1a1a1a">1.00</div>
<div class="t" style="left:797.40px;top:220.52px;font-size:10.0px;color:#1a1a1a;transform:scaleX(0.8974);-webkit-text-stroke:0px #1a1a1a">1.00</div>
<div class="t" style="left:878.50px;top:220.52px;font-size:10.0px;color:#1a1a1a;transform:scaleX(0.8974);-webkit-text-stroke:0px #1a1a1a">0.00</div>
<div class="t" style="left:953.10px;top:220.52px;font-size:10.0px;color:#1a1a1a;transform:scaleX(0.9200);-webkit-text-stroke:0px #1a1a1a">46.00</div>
<div class="t" style="left:15.20px;top:237.44px;font-size:10.0px;color:#1a1a1a;transform:scaleX(0.9218);-webkit-text-stroke:0px #1a1a1a">0000800870</div>
<div class="t" style="left:95.70px;top:237.44px;font-size:10.0px;color:#1a1a1a;transform:scaleX(0.9540);-webkit-text-stroke:0px #1a1a1a">2021-10-14</div>
<div class="t" style="left:256.70px;top:237.44px;font-size:10.0px;color:#1a1a1a;transform:scaleX(0.7965);-webkit-text-stroke:0px #1a1a1a">JACFIT</div>
<div class="t" style="left:337.30px;top:237.44px;font-size:10.0px;color:#1a1a1a;transform:scaleX(0.8913);-webkit-text-stroke:0px #1a1a1a">Jackson Fitness ...</div>
<div class="t" style="left:417.60px;top:237.44px;font-size:10.0px;color:#1a1a1a;transform:scaleX(0.8730);-webkit-text-stroke:0px #1a1a1a">VA</div>
<div class="t" style="left:498.20px;top:237.44px;font-size:10.0px;color:#1a1a1a;transform:scaleX(0.8686);-webkit-text-stroke:0px #1a1a1a">INSKB40</div>
<div class="t" style="left:579.00px;top:237.44px;font-size:10.0px;color:#1a1a1a;transform:scaleX(0.9258);-webkit-text-stroke:0px #1a1a1a">InSpire Kettlebe...</div>
<div class="t" style="left:716.90px;top:237.44px;font-size:10.0px;color:#1a1a1a;transform:scaleX(0.8974);-webkit-text-stroke:0px #1a1a1a">1.00</div>
<div class="t" style="left:797.40px;top:237.44px;font-size:10.0px;color:#1a1a1a;transform:scaleX(0.8974);-webkit-text-stroke:0px #1a1a1a">1.00</div>
<div class="t" style="left:878.50px;top:237.44px;font-size:10.0px;color:#1a1a1a;transform:scaleX(0.8974);-webkit-text-stroke:0px #1a1a1a">0.00</div>
<div class="t" style="left:953.10px;top:237.44px;font-size:10.0px;color:#1a1a1a;transform:scaleX(0.9200);-webkit-text-stroke:0px #1a1a1a">85.00</div>
<div class="t" style="left:15.20px;top:254.36px;font-size:10.0px;color:#1a1a1a;transform:scaleX(0.9218);-webkit-text-stroke:0px #1a1a1a">0000800870</div>
<div class="t" style="left:95.70px;top:254.36px;font-size:10.0px;color:#1a1a1a;transform:scaleX(0.9540);-webkit-text-stroke:0px #1a1a1a">2021-10-14</div>
<div class="t" style="left:256.70px;top:254.36px;font-size:10.0px;color:#1a1a1a;transform:scaleX(0.7965);-webkit-text-stroke:0px #1a1a1a">JACFIT</div>
<div class="t" style="left:337.30px;top:254.36px;font-size:10.0px;color:#1a1a1a;transform:scaleX(0.8913);-webkit-text-stroke:0px #1a1a1a">Jackson Fitness ...</div>
<div class="t" style="left:417.60px;top:254.36px;font-size:10.0px;color:#1a1a1a;transform:scaleX(0.8730);-webkit-text-stroke:0px #1a1a1a">VA</div>
<div class="t" style="left:498.20px;top:254.36px;font-size:10.0px;color:#1a1a1a;transform:scaleX(0.8838);-webkit-text-stroke:0px #1a1a1a">INSWP30</div>
<div class="t" style="left:579.00px;top:254.36px;font-size:10.0px;color:#1a1a1a;transform:scaleX(0.9438);-webkit-text-stroke:0px #1a1a1a">InSpire Weight ...</div>
<div class="t" style="left:716.90px;top:254.36px;font-size:10.0px;color:#1a1a1a;transform:scaleX(0.8974);-webkit-text-stroke:0px #1a1a1a">1.00</div>
<div class="t" style="left:797.40px;top:254.36px;font-size:10.0px;color:#1a1a1a;transform:scaleX(0.8974);-webkit-text-stroke:0px #1a1a1a">1.00</div>
<div class="t" style="left:878.50px;top:254.36px;font-size:10.0px;color:#1a1a1a;transform:scaleX(0.8974);-webkit-text-stroke:0px #1a1a1a">0.00</div>
<div class="t" style="left:953.10px;top:254.36px;font-size:10.0px;color:#1a1a1a;transform:scaleX(0.9200);-webkit-text-stroke:0px #1a1a1a">42.00</div>
<div class="t" style="left:15.20px;top:271.28px;font-size:10.0px;color:#1a1a1a;transform:scaleX(0.9218);-webkit-text-stroke:0px #1a1a1a">0000800870</div>
<div class="t" style="left:95.70px;top:271.28px;font-size:10.0px;color:#1a1a1a;transform:scaleX(0.9540);-webkit-text-stroke:0px #1a1a1a">2021-10-14</div>
<div class="t" style="left:256.70px;top:271.28px;font-size:10.0px;color:#1a1a1a;transform:scaleX(0.7965);-webkit-text-stroke:0px #1a1a1a">JACFIT</div>
<div class="t" style="left:337.30px;top:271.28px;font-size:10.0px;color:#1a1a1a;transform:scaleX(0.8913);-webkit-text-stroke:0px #1a1a1a">Jackson Fitness ...</div>
<div class="t" style="left:417.60px;top:271.28px;font-size:10.0px;color:#1a1a1a;transform:scaleX(0.8730);-webkit-text-stroke:0px #1a1a1a">VA</div>
<div class="t" style="left:498.20px;top:271.28px;font-size:10.0px;color:#1a1a1a;transform:scaleX(0.8832);-webkit-text-stroke:0px #1a1a1a">MSWARRANTY</div>
<div class="t" style="left:579.00px;top:271.28px;font-size:10.0px;color:#1a1a1a;transform:scaleX(0.9318);-webkit-text-stroke:0px #1a1a1a">Moet 3 Year ...</div>
<div class="t" style="left:716.90px;top:271.28px;font-size:10.0px;color:#1a1a1a;transform:scaleX(0.8974);-webkit-text-stroke:0px #1a1a1a">1.00</div>
<div class="t" style="left:797.40px;top:271.28px;font-size:10.0px;color:#1a1a1a;transform:scaleX(0.8974);-webkit-text-stroke:0px #1a1a1a">1.00</div>
<div class="t" style="left:878.50px;top:271.28px;font-size:10.0px;color:#1a1a1a;transform:scaleX(0.8974);-webkit-text-stroke:0px #1a1a1a">0.00</div>
<div class="t" style="left:943.20px;top:271.28px;font-size:10.0px;color:#1a1a1a;transform:scaleX(0.9114);-webkit-text-stroke:0px #1a1a1a">197.143</div>
<div class="t" style="left:15.20px;top:288.20px;font-size:10.0px;color:#1a1a1a;transform:scaleX(0.9218);-webkit-text-stroke:0px #1a1a1a">0000800870</div>
<div class="t" style="left:95.70px;top:288.20px;font-size:10.0px;color:#1a1a1a;transform:scaleX(0.9540);-webkit-text-stroke:0px #1a1a1a">2021-10-14</div>
<div class="t" style="left:256.70px;top:288.20px;font-size:10.0px;color:#1a1a1a;transform:scaleX(0.7965);-webkit-text-stroke:0px #1a1a1a">JACFIT</div>
<div class="t" style="left:337.30px;top:288.20px;font-size:10.0px;color:#1a1a1a;transform:scaleX(0.8913);-webkit-text-stroke:0px #1a1a1a">Jackson Fitness ...</div>
<div class="t" style="left:417.60px;top:288.20px;font-size:10.0px;color:#1a1a1a;transform:scaleX(0.8730);-webkit-text-stroke:0px #1a1a1a">VA</div>
<div class="t" style="left:498.20px;top:288.20px;font-size:10.0px;color:#1a1a1a;transform:scaleX(0.8783);-webkit-text-stroke:0px #1a1a1a">NATSQ</div>
<div class="t" style="left:579.00px;top:288.20px;font-size:10.0px;color:#1a1a1a;transform:scaleX(0.9339);-webkit-text-stroke:0px #1a1a1a">Adjustable Squ...</div>
<div class="t" style="left:716.90px;top:288.20px;font-size:10.0px;color:#1a1a1a;transform:scaleX(0.8974);-webkit-text-stroke:0px #1a1a1a">1.00</div>
<div class="t" style="left:797.40px;top:288.20px;font-size:10.0px;color:#1a1a1a;transform:scaleX(0.8974);-webkit-text-stroke:0px #1a1a1a">1.00</div>
<div class="t" style="left:878.50px;top:288.20px;font-size:10.0px;color:#1a1a1a;transform:scaleX(0.8974);-webkit-text-stroke:0px #1a1a1a">0.00</div>
<div class="t" style="left:948.60px;top:288.20px;font-size:10.0px;color:#1a1a1a;transform:scaleX(0.8987);-webkit-text-stroke:0px #1a1a1a">129.00</div>
<div class="t" style="left:15.20px;top:305.12px;font-size:10.0px;color:#1a1a1a;transform:scaleX(0.9218);-webkit-text-stroke:0px #1a1a1a">0000800870</div>
<div class="t" style="left:95.70px;top:305.12px;font-size:10.0px;color:#1a1a1a;transform:scaleX(0.9540);-webkit-text-stroke:0px #1a1a1a">2021-10-14</div>
<div class="t" style="left:256.70px;top:305.12px;font-size:10.0px;color:#1a1a1a;transform:scaleX(0.7965);-webkit-text-stroke:0px #1a1a1a">JACFIT</div>
<div class="t" style="left:337.30px;top:305.12px;font-size:10.0px;color:#1a1a1a;transform:scaleX(0.8913);-webkit-text-stroke:0px #1a1a1a">Jackson Fitness ...</div>
<div class="t" style="left:417.60px;top:305.12px;font-size:10.0px;color:#1a1a1a;transform:scaleX(0.8730);-webkit-text-stroke:0px #1a1a1a">VA</div>
<div class="t" style="left:498.20px;top:305.12px;font-size:10.0px;color:#1a1a1a;transform:scaleX(0.8668);-webkit-text-stroke:0px #1a1a1a">WALEQFITBAN</div>
<div class="t" style="left:579.00px;top:305.12px;font-size:10.0px;color:#1a1a1a;transform:scaleX(0.9121);-webkit-text-stroke:0px #1a1a1a">Walcom Fitness ...</div>
<div class="t" style="left:716.90px;top:305.12px;font-size:10.0px;color:#1a1a1a;transform:scaleX(0.8974);-webkit-text-stroke:0px #1a1a1a">1.00</div>
<div class="t" style="left:797.40px;top:305.12px;font-size:10.0px;color:#1a1a1a;transform:scaleX(0.8974);-webkit-text-stroke:0px #1a1a1a">1.00</div>
<div class="t" style="left:878.50px;top:305.12px;font-size:10.0px;color:#1a1a1a;transform:scaleX(0.8974);-webkit-text-stroke:0px #1a1a1a">0.00</div>
<div class="t" style="left:953.10px;top:305.12px;font-size:10.0px;color:#1a1a1a;transform:scaleX(0.9200);-webkit-text-stroke:0px #1a1a1a">60.00</div>
<div class="t" style="left:15.20px;top:322.04px;font-size:10.0px;color:#1a1a1a;transform:scaleX(0.9218);-webkit-text-stroke:0px #1a1a1a">0000800870</div>
<div class="t" style="left:95.70px;top:322.04px;font-size:10.0px;color:#1a1a1a;transform:scaleX(0.9540);-webkit-text-stroke:0px #1a1a1a">2021-10-14</div>
<div class="t" style="left:256.70px;top:322.04px;font-size:10.0px;color:#1a1a1a;transform:scaleX(0.7965);-webkit-text-stroke:0px #1a1a1a">JACFIT</div>
<div class="t" style="left:337.30px;top:322.04px;font-size:10.0px;color:#1a1a1a;transform:scaleX(0.8913);-webkit-text-stroke:0px #1a1a1a">Jackson Fitness ...</div>
<div class="t" style="left:417.60px;top:322.04px;font-size:10.0px;color:#1a1a1a;transform:scaleX(0.8730);-webkit-text-stroke:0px #1a1a1a">VA</div>
<div class="t" style="left:498.20px;top:322.04px;font-size:10.0px;color:#1a1a1a;transform:scaleX(0.8849);-webkit-text-stroke:0px #1a1a1a">INSDB50</div>
<div class="t" style="left:579.00px;top:322.04px;font-size:10.0px;color:#1a1a1a;transform:scaleX(0.9427);-webkit-text-stroke:0px #1a1a1a">InSpire Dumbb...</div>
<div class="t" style="left:716.90px;top:322.04px;font-size:10.0px;color:#1a1a1a;transform:scaleX(0.8974);-webkit-text-stroke:0px #1a1a1a">1.00</div>
<div class="t" style="left:797.40px;top:322.04px;font-size:10.0px;color:#1a1a1a;transform:scaleX(0.8974);-webkit-text-stroke:0px #1a1a1a">1.00</div>
<div class="t" style="left:878.50px;top:322.04px;font-size:10.0px;color:#1a1a1a;transform:scaleX(0.8974);-webkit-text-stroke:0px #1a1a1a">0.00</div>
<div class="t" style="left:948.60px;top:322.04px;font-size:10.0px;color:#1a1a1a;transform:scaleX(0.9228);-webkit-text-stroke:0px #1a1a1a">118.00</div>
<div class="t" style="left:15.20px;top:338.96px;font-size:10.0px;color:#1a1a1a;transform:scaleX(0.9218);-webkit-text-stroke:0px #1a1a1a">0000800934</div>
<div class="t" style="left:95.70px;top:338.96px;font-size:10.0px;color:#1a1a1a;transform:scaleX(0.9540);-webkit-text-stroke:0px #1a1a1a">2022-04-25</div>
<div class="t" style="left:256.70px;top:338.96px;font-size:10.0px;color:#1a1a1a;transform:scaleX(0.7965);-webkit-text-stroke:0px #1a1a1a">JACFIT</div>
<div class="t" style="left:337.30px;top:338.96px;font-size:10.0px;color:#1a1a1a;transform:scaleX(0.8913);-webkit-text-stroke:0px #1a1a1a">Jackson Fitness ...</div>
<div class="t" style="left:417.60px;top:338.96px;font-size:10.0px;color:#1a1a1a;transform:scaleX(0.8730);-webkit-text-stroke:0px #1a1a1a">VA</div>
<div class="t" style="left:498.20px;top:338.96px;font-size:10.0px;color:#1a1a1a;transform:scaleX(0.8466);-webkit-text-stroke:0px #1a1a1a">LABOR</div>
<div class="t" style="left:579.00px;top:338.96px;font-size:10.0px;color:#1a1a1a;transform:scaleX(0.9595);-webkit-text-stroke:0px #1a1a1a">labor</div>
<div class="t" style="left:716.90px;top:338.96px;font-size:10.0px;color:#1a1a1a;transform:scaleX(0.8974);-webkit-text-stroke:0px #1a1a1a">1.50</div>
<div class="t" style="left:797.40px;top:338.96px;font-size:10.0px;color:#1a1a1a;transform:scaleX(0.8974);-webkit-text-stroke:0px #1a1a1a">1.50</div>
<div class="t" style="left:878.50px;top:338.96px;font-size:10.0px;color:#1a1a1a;transform:scaleX(0.8974);-webkit-text-stroke:0px #1a1a1a">0.00</div>
<div class="t" style="left:948.60px;top:338.96px;font-size:10.0px;color:#1a1a1a;transform:scaleX(0.8987);-webkit-text-stroke:0px #1a1a1a">100.00</div>
</body></html>
